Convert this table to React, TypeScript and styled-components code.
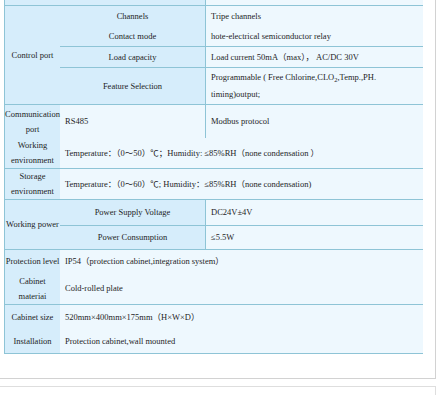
import React from "react";
import styled, { createGlobalStyle } from "styled-components";

const Global = createGlobalStyle`
  html, body { margin: 0; padding: 0; background: #ffffff; }
  body { width: 440px; height: 395px; overflow: hidden; }
`;

const LINE = "#8ec4d6";
const LABEL_BG = "#d6edfb";
const VALUE_BG = "#eef8fe";

const Panel = styled.section`
  box-sizing: border-box;
  width: 436px;
  padding: 0 12px 24px 4px;
  border-right: 1px solid #d2d2d2;
  border-bottom: 1px solid #d2d2d2;
`;

const NextPanel = styled.section`
  box-sizing: border-box;
  width: 436px;
  height: 30px;
  margin-top: 7px;
  border-top: 1px solid #dedede;
  border-right: 1px solid #dedede;
`;

const Table = styled.table`
  border-collapse: separate;
  border-spacing: 0;
  table-layout: fixed;
  width: 419px;
  border-left: 1px solid ${LINE};
  font-family: "Liberation Serif", "Noto Sans CJK SC", serif;
  font-size: 8.5px;
  color: #1e1e1e;
`;

const Row = styled.tr<{ $h: number }>`
  height: ${(p) => p.$h}px;
`;

const Cell = styled.td<{
  $tone: "label" | "value";
  $center?: boolean;
  $line?: boolean;
  $split?: boolean;
}>`
  box-sizing: border-box;
  padding: 0 5px;
  background: ${(p) => (p.$tone === "label" ? LABEL_BG : VALUE_BG)};
  border-bottom: ${(p) => (p.$line ? `1px solid ${LINE}` : "0")};
  border-left: ${(p) => (p.$split ? `1px solid ${LINE}` : "0")};
  text-align: ${(p) => (p.$center ? "center" : "left")};
  vertical-align: middle;
  line-height: 15px;
  white-space: nowrap;
`;

const LabelCell = styled(Cell)`
  padding: 0;
  white-space: normal;
`;

const ValueLines = styled.div`
  line-height: 17px;
`;

const Sub = styled.sub`
  font-size: 6.5px;
  line-height: 0;
  vertical-align: -2px;
`;

export default function App() {
  return (
    <>
      <Global />
      <Panel>
        <Table>
          <colgroup>
            <col style={{ width: 55 }} />
            <col style={{ width: 145 }} />
            <col style={{ width: 218 }} />
          </colgroup>
          <tbody>
            <Row $h={6}>
              <Cell $tone="label" $line />
              <Cell $tone="label" $line />
              <Cell $tone="value" $line $split />
            </Row>
            <Row $h={20}>
              <LabelCell $tone="label" $center $line rowSpan={4}>
                Control port
              </LabelCell>
              <Cell $tone="label" $center>Channels</Cell>
              <Cell $tone="value" $split>Tripe channels</Cell>
            </Row>
            <Row $h={21}>
              <Cell $tone="label" $center $line>Contact mode</Cell>
              <Cell $tone="value" $line $split>
                hote-electrical semiconductor relay
              </Cell>
            </Row>
            <Row $h={21}>
              <Cell $tone="label" $center $line>Load capacity</Cell>
              <Cell $tone="value" $line $split>
                Load current 50mA（max）， AC/DC 30V
              </Cell>
            </Row>
            <Row $h={37}>
              <Cell $tone="label" $center $line>Feature Selection</Cell>
              <Cell $tone="value" $line $split>
                <ValueLines>
                  Programmable ( Free Chlorine,CLO<Sub>2</Sub>,Temp.,PH.
                  <br />
                  timing)output;
                </ValueLines>
              </Cell>
            </Row>
            <Row $h={33}>
              <LabelCell $tone="label" $center>
                Communication port
              </LabelCell>
              <Cell $tone="value">RS485</Cell>
              <Cell $tone="value" $split>Modbus protocol</Cell>
            </Row>
            <Row $h={30}>
              <LabelCell $tone="label" $center $line>
                Working environment
              </LabelCell>
              <Cell $tone="value" $line colSpan={2}>
                Temperature：（0～50）℃；Humidity: ≤85%RH（none condensation ）
              </Cell>
            </Row>
            <Row $h={30}>
              <LabelCell $tone="label" $center $line>
                Storage environment
              </LabelCell>
              <Cell $tone="value" $line colSpan={2}>
                Temperature：（0～60）℃; Humidity：≤85%RH（none condensation)
              </Cell>
            </Row>
            <Row $h={26}>
              <LabelCell $tone="label" $center $line rowSpan={2}>
                Working power
              </LabelCell>
              <Cell $tone="label" $center $line>Power Supply Voltage</Cell>
              <Cell $tone="value" $line $split>DC24V±4V</Cell>
            </Row>
            <Row $h={24}>
              <Cell $tone="label" $center $line>Power Consumption</Cell>
              <Cell $tone="value" $line $split>≤5.5W</Cell>
            </Row>
            <Row $h={23}>
              <LabelCell $tone="label" $center>
                Protection level
              </LabelCell>
              <Cell $tone="value" colSpan={2}>
                IP54（protection cabinet,integration system）
              </Cell>
            </Row>
            <Row $h={32}>
              <LabelCell $tone="label" $center $line>
                Cabinet materiai
              </LabelCell>
              <Cell $tone="value" $line colSpan={2}>
                Cold-rolled plate
              </Cell>
            </Row>
            <Row $h={25}>
              <LabelCell $tone="label" $center>
                Cabinet size
              </LabelCell>
              <Cell $tone="value" colSpan={2}>
                520mm×400mm×175mm（H×W×D）
              </Cell>
            </Row>
            <Row $h={24}>
              <LabelCell $tone="label" $center $line>
                Installation
              </LabelCell>
              <Cell $tone="value" $line colSpan={2}>
                Protection cabinet,wall mounted
              </Cell>
            </Row>
          </tbody>
        </Table>
      </Panel>
      <NextPanel />
    </>
  );
}
